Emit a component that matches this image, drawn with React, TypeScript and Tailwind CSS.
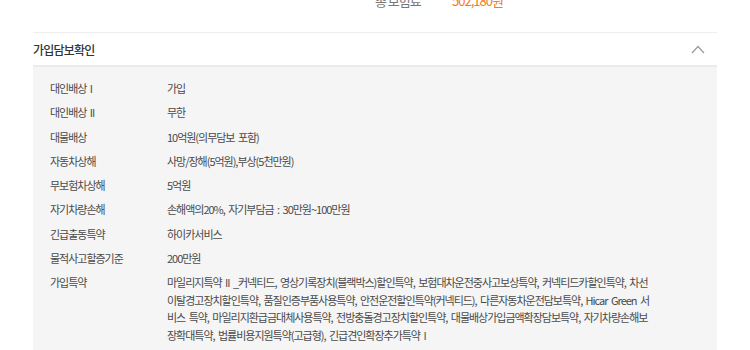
const rows: { label: string; value: string[] }[] = [
  { label: '대인배상 I', value: ['가입'] },
  { label: '대인배상 II', value: ['무한'] },
  { label: '대물배상', value: ['10억원(의무담보 포함)'] },
  { label: '자동차상해', value: ['사망/장해(5억원),부상(5천만원)'] },
  { label: '무보험차상해', value: ['5억원'] },
  { label: '자기차량손해', value: ['손해액의20%, 자기부담금 : 30만원~100만원'] },
  { label: '긴급출동특약', value: ['하이카서비스'] },
  { label: '물적사고할증기준', value: ['200만원'] },
  {
    label: '가입특약',
    value: [
      '마일리지특약 II _커넥티드, 영상기록장치(블랙박스)할인특약, 보험대차운전중사고보상특약, 커넥티드카할인특약, 차선',
      '이탈경고장치할인특약, 품질인증부품사용특약, 안전운전할인특약(커넥티드), 다른자동차운전담보특약, Hicar Green 서',
      '비스 특약, 마일리지환급금대체사용특약, 전방충돌경고장치할인특약, 대물배상가입금액확장담보특약, 자기차량손해보',
      '장확대특약, 법률비용지원특약(고급형), 긴급견인확장추가특약 I',
    ],
  },
];

export default function App() {
  return (
    <div
      className="w-[750px] h-[350px] overflow-hidden bg-white"
      style={{ fontFamily: '"Noto Sans CJK KR", "Noto Sans", sans-serif' }}
    >
      {/* total premium */}
      <div className="flex items-center h-[14px] -mt-[6px] pl-[375px] text-[13px] leading-[14px] tracking-[-1px]">
        <span className="w-[77px] text-[#777]">총 보험료</span>
        <span className="text-[#f47b2a]">502,180원</span>
      </div>

      <div className="mx-[33px] mt-[24px]">
        <div className="border-t border-[#eeeeee] h-[33px] flex items-center justify-between">
          <h3 className="text-[12px] font-medium text-[#333] tracking-[-0.8px] pt-[1px]">가입담보확인</h3>
          <svg width="14" height="9" viewBox="0 0 14 9" className="mr-[12px]">
            <path d="M1 8 L7 1.5 L13 8" fill="none" stroke="#9a9a9a" strokeWidth="1.2" />
          </svg>
        </div>
        <div className="border-t-2 border-[#ebebeb] bg-[#f5f5f5] pt-[13px] pb-[20px] pl-[17px] flex flex-col gap-[6.7px]">
          {rows.map((r) => (
            <div
              key={r.label}
              className="flex text-[11px] leading-[17.6px] tracking-[-1.02px] [word-spacing:2px] text-[#4a4a4a]"
            >
              <div className="w-[117px] shrink-0">{r.label}</div>
              <div className="whitespace-nowrap">
                {r.value.map((line, i) => (
                  <div key={i}>{line}</div>
                ))}
              </div>
            </div>
          ))}
        </div>
      </div>
    </div>
  );
}
